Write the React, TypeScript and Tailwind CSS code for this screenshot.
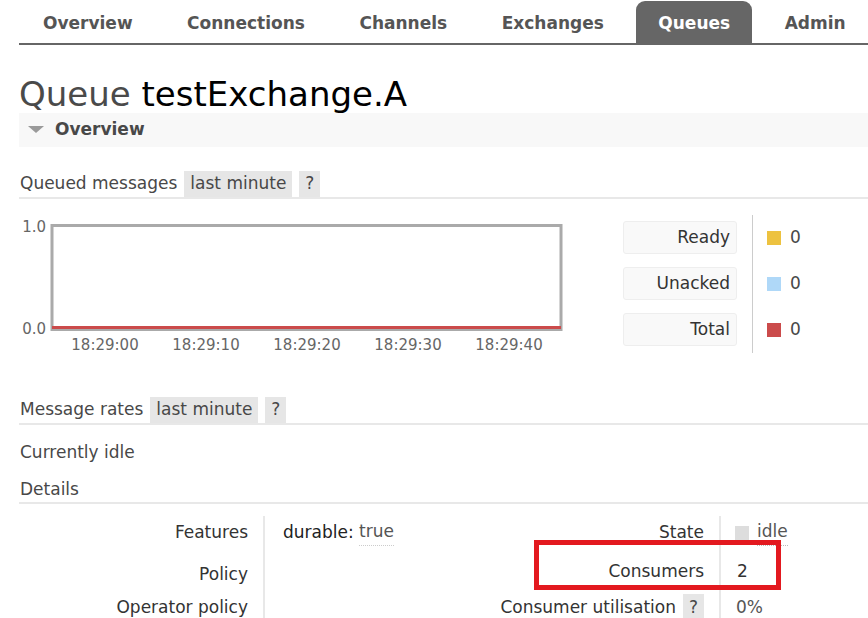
const TABS = ['Overview', 'Connections', 'Channels', 'Exchanges', 'Queues', 'Admin'];

const TICKS = ['18:29:00', '18:29:10', '18:29:20', '18:29:30', '18:29:40'];

const LEGEND = [
  { label: 'Ready', color: 'bg-[#edc240]', value: 0 },
  { label: 'Unacked', color: 'bg-[#afd8f8]', value: 0 },
  { label: 'Total', color: 'bg-[#cb4b4b]', value: 0 },
];

const Tag = ({ children }: { children: React.ReactNode }) => (
  <span className="flex h-[26px] items-center bg-[#e6e6e6] px-[6px] text-[#484848]">{children}</span>
);

const SectionHeading = ({ title, tag }: { title: string; tag?: boolean }) => (
  <div className="flex h-[28px] items-end gap-[7px] border-b-2 border-[#e8e8e8]">
    <span className="flex h-[26px] items-center pl-px text-[#484848]">{title}</span>
    {tag && (
      <>
        <Tag>last minute</Tag>
        <Tag>?</Tag>
      </>
    )}
  </div>
);

const QueuedChart = () => (
  <svg width="548" height="140" className="shrink-0">
    <text x="27" y="17" textAnchor="end" fontSize="15" fill="#666">1.0</text>
    <text x="27" y="119" textAnchor="end" fontSize="15" fill="#666">0.0</text>
    <rect x="33" y="10.5" width="509" height="104" fill="none" stroke="#aaa" strokeWidth="3" />
    <line x1="33" y1="112.5" x2="542" y2="112.5" stroke="#cb4b4b" strokeWidth="3" />
    {TICKS.map((t, i) => (
      <text key={t} x={86 + i * 101} y="135" textAnchor="middle" fontSize="15" fill="#666">
        {t}
      </text>
    ))}
  </svg>
);

export default function App() {
  return (
    <div className="relative min-h-[618px] w-[868px] overflow-hidden bg-white font-['DejaVu_Sans',sans-serif] text-[17px] text-[#333]">
      {/* top nav */}
      <nav className="ml-[19px] flex h-[45px] items-end gap-[10.5px] border-b-2 border-[#666] pl-[2px]">
        {TABS.map((t) => (
          <div
            key={t}
            className={
              t === 'Queues'
                ? 'flex h-[42px] items-center rounded-t-[9px] bg-[#666] px-[22px] pt-[3px] font-bold text-white'
                : 'flex h-[42px] items-center px-[22px] pt-[3px] font-bold text-[#555]'
            }
          >
            {t}
          </div>
        ))}
      </nav>

      <div className="pl-[19px]">
        <h1 className="mt-[29px] h-[39px] text-[34px] leading-[41px] text-[#4a4a4a]">
          Queue <span className="text-black">testExchange.A</span>
        </h1>

        <div className="flex h-[34px] items-center gap-[11px] bg-[#f8f8f8] pl-[9px]">
          <svg width="16" height="8" viewBox="0 0 16 8">
            <polygon points="0,0 16,0 8,7" fill="#9a9a9a" />
          </svg>
          <span className="font-bold text-[#484848]">Overview</span>
        </div>

        <div className="mt-[24px]">
          <SectionHeading title="Queued messages" tag />
        </div>

        <div className="mt-[16px] flex h-[138px]">
          <QueuedChart />
          <div className="ml-[56px] flex flex-col gap-[13px] pt-[6px]">
            {LEGEND.map((l) => (
              <div
                key={l.label}
                className="flex h-[33px] w-[114px] items-center justify-end rounded-[3px] border border-[#eee] bg-[#f9f9f9] pr-[6px]"
              >
                {l.label}
              </div>
            ))}
          </div>
          <div className="ml-[15px] w-px bg-[#ccc]" />
          <div className="ml-[14px] flex flex-col gap-[13px] pt-[6px]">
            {LEGEND.map((l) => (
              <div key={l.label} className="flex h-[33px] items-center gap-[9px] text-[#484848]">
                <span className={`h-[14px] w-[14px] ${l.color}`} />
                {l.value}
              </div>
            ))}
          </div>
        </div>

        <div className="mt-[44px]">
          <SectionHeading title="Message rates" tag />
        </div>

        <div className="mt-[15px] pl-px text-[#484848]">Currently idle</div>

        <div className="mt-[12px] flex h-[26px] items-center border-b-2 border-[#e8e8e8] pl-px text-[#484848]">
          Details
        </div>

        <div className="mt-[12px] flex">
          <div className="grid w-[461px] grid-cols-[246px_215px] grid-rows-[34px_46px_24px]">
            <div className="flex items-center justify-end border-r-2 border-[#e8e8e8] pr-[15px]">Features</div>
            <div className="flex items-center pl-[18px] text-[#222]">
              durable:&nbsp;
              <span className="border-b border-dotted border-[#ccc] text-[#555]">true</span>
            </div>
            <div className="flex items-end justify-end border-r-2 border-[#e8e8e8] pb-[8px] pr-[15px]">Policy</div>
            <div />
            <div className="flex items-center justify-end border-r-2 border-[#e8e8e8] pr-[15px]">Operator policy</div>
            <div />
          </div>

          <div className="grid grid-cols-[241px_auto] grid-rows-[34px_46px_24px]">
            <div className="flex items-center justify-end border-r-2 border-[#e8e8e8] pr-[15px]">State</div>
            <div className="flex items-center gap-[8px] pl-[14px] text-[#555]">
              <span className="h-[14px] w-[14px] bg-[#ddd]" />
              <span className="border-b border-dotted border-[#bbb]">idle</span>
            </div>
            <div className="flex items-end justify-end border-r-2 border-[#e8e8e8] pb-[11px] pr-[15px]">Consumers</div>
            <div className="flex items-end pb-[11px] pl-[16px]">2</div>
            <div className="flex items-center justify-end gap-[7px] border-r-2 border-[#e8e8e8] pr-[15px]">
              Consumer utilisation
              <span className="flex h-[28px] items-center bg-[#e6e6e6] px-[6px] text-[#484848]">?</span>
            </div>
            <div className="flex items-center pl-[15px] text-[#555]">0%</div>
          </div>
        </div>
      </div>

      {/* annotation box */}
      <div className="absolute left-[534px] top-[540px] h-[50px] w-[247px] border-[5px] border-[#e3191f]" />
    </div>
  );
}
